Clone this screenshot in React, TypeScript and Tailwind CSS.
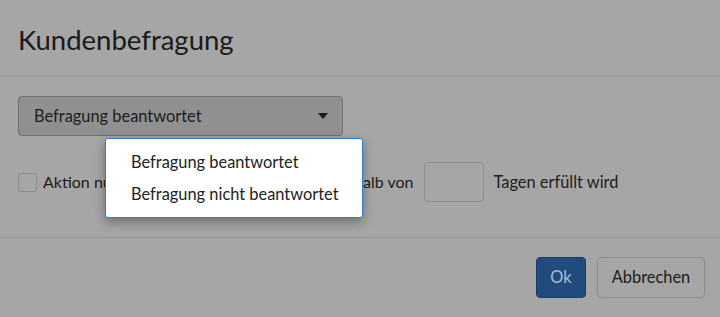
import React from 'react'

const options = ['Befragung beantwortet', 'Befragung nicht beantwortet']

export default function App() {
  return (
    <div
      className="relative w-[720px] h-[317px] overflow-hidden bg-[#a6a6a6] text-[#1c1c1c]"
      style={{ fontFamily: 'Lato, "Open Sans", sans-serif' }}
    >
      {/* header */}
      <div className="h-[77px] border-b border-[#999999] px-[18px] pt-[20px]">
        <h1 className="text-[27.5px] leading-[40px] font-normal text-[#1a1a1a]">Kundenbefragung</h1>
      </div>

      {/* body */}
      <div className="h-[161px] border-b border-[#999999] px-[18px] pt-[19px]">
        <div className="flex h-[40px] w-[325px] items-center justify-between rounded-[4px] border border-[#707070] bg-[#909090] pl-[15px] pr-[14px] text-[16.4px]">
          <span>Befragung beantwortet</span>
          <svg width="10" height="6" viewBox="0 0 10 6">
            <path d="M0 0h10L5 6z" fill="#1a1a1a" />
          </svg>
        </div>

        <div className="mt-[26px] flex items-center whitespace-nowrap text-[16px]">
          <span className="h-[19px] w-[19px] rounded-[3px] border border-[#8a8a8a] bg-[#a6a6a6]" />
          <span className="ml-[6px]">Aktion nur ausführen, wenn Befragung innerhalb von</span>
          <span className="ml-[11px] h-[40px] w-[60px] rounded-[4px] border border-[#8c8c8c]" />
          <span className="ml-[9px] text-[16.4px]">Tagen erfüllt wird</span>
        </div>
      </div>

      {/* footer */}
      <div className="flex justify-end gap-[11px] pr-[15px] pt-[19px] text-[16.4px]">
        <button className="h-[41px] w-[50px] rounded-[4px] border border-[#1b3e68] bg-[#204b7c] text-[#a9bdd3]">
          Ok
        </button>
        <button className="h-[41px] w-[108px] rounded-[4px] border border-[#8a8a8a] bg-[#a6a6a6] text-[#1c1c1c]">
          Abbrechen
        </button>
      </div>

      {/* open dropdown menu */}
      <ul className="absolute left-[105px] top-[138px] w-[258px] whitespace-nowrap rounded-[3px] border border-[#2a7fd4] bg-white py-[7px] text-[16.4px] text-[#222222] shadow-[0_4px_12px_rgba(0,0,0,0.35)]">
        {options.map((o) => (
          <li key={o} className="px-[25px] leading-[32px]">
            {o}
          </li>
        ))}
      </ul>
    </div>
  )
}
